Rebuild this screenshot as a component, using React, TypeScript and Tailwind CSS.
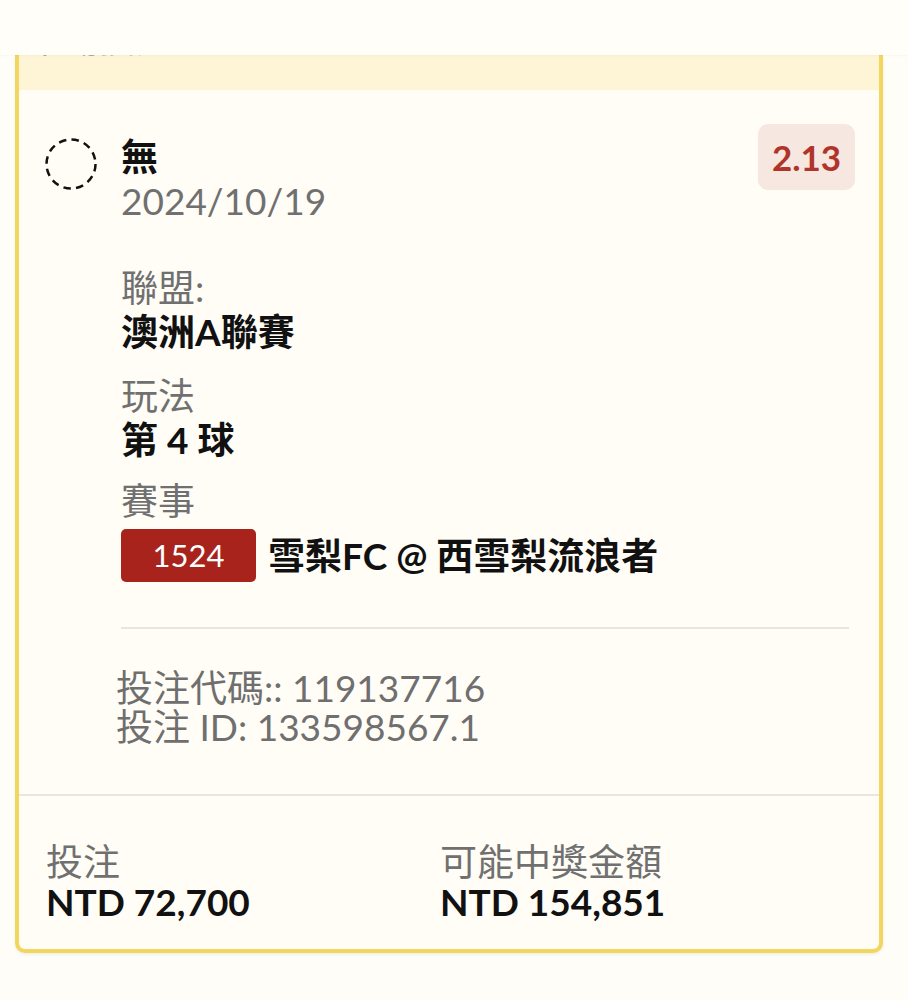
import React from 'react';

const font = "font-['Lato','Noto_Sans_CJK_TC',sans-serif]";

const Field = ({ label, value, className = '' }: { label: string; value: React.ReactNode; className?: string }) => (
  <div className={className}>
    <div className="text-[37px] leading-[44px] text-[#707070]">{label}</div>
    <div className="text-[37px] leading-[44px] font-bold text-[#111]">{value}</div>
  </div>
);

export default function App() {
  return (
    <div className={`min-h-screen bg-[#fffdf7] ${font}`}>
      {/* Top bar */}
      <div className="h-[55px] bg-[#fffef8] shadow-[0_1px_2px_rgba(0,0,0,0.03)] relative z-10" />

      <div className="pl-[15px] pr-[25px]">
        <div className="border-x-4 border-b-4 border-[#f2d65e] rounded-b-[10px] bg-[#fffdf6] overflow-hidden shadow-[0_2px_3px_rgba(0,0,0,0.06)]">
          {/* Header band (scrolled under top bar) */}
          <div className="h-[35px] bg-[#fdf5d6] overflow-hidden">
            <div className="-mt-[38px] pl-[8px] text-[36px] leading-[44px] text-[#a8a8a8]">單場投注</div>
          </div>

          {/* Main */}
          <div className="flex gap-6 pl-[26px] pr-[30px] pt-[34px] pb-[48px] border-b-2 border-[#e8e6df]">
            <div className="mt-[14px] w-[52px] h-[52px] shrink-0">
              <svg viewBox="0 0 52 52" width="52" height="52">
                <circle cx="26" cy="26" r="24.5" fill="none" stroke="#111" strokeWidth="2.5" strokeDasharray="7.5 5.3" />
              </svg>
            </div>

            <div className="flex-1 min-w-0">
              <div className="flex justify-between items-start">
                <div className="mt-[11px]">
                  <div className="text-[37px] leading-[44px] font-bold text-[#111]">無</div>
                  <div className="text-[37px] leading-[44px] text-[#707070]">2024/10/19</div>
                </div>
                <div className="-mr-[6px] w-[97px] h-[66px] rounded-[10px] bg-[#f6e7e1] flex items-center justify-center text-[35px] font-bold text-[#b1342a]">
                  2.13
                </div>
              </div>

              <Field className="mt-[43px]" label="聯盟:" value="澳洲A聯賽" />
              <Field className="mt-[20px]" label="玩法" value="第 4 球" />

              <div className="mt-[17px]">
                <div className="text-[37px] leading-[44px] text-[#707070]">賽事</div>
                <div className="mt-[6px] flex items-center gap-[12px]">
                  <div className="w-[135px] h-[53px] rounded-[5px] bg-[#a8231b] flex items-center justify-center text-[31px] text-white">1524</div>
                  <div className="text-[37px] leading-[44px] font-bold text-[#111]">雪梨FC @ 西雪梨流浪者</div>
                </div>
              </div>

              <div className="mt-[45px] h-[2px] bg-[#e8e6df]" />

              <div className="mt-[39px] -ml-[5px] text-[37px] leading-[39px] text-[#6f6f6f]">
                <div>投注代碼:: 119137716</div>
                <div>投注 ID: 133598567.1</div>
              </div>
            </div>
          </div>

          {/* Footer */}
          <div className="flex pl-[27px] pt-[46px] pb-[27px]">
            <div className="w-[394px]">
              <div className="text-[37px] leading-[40px] text-[#707070]">投注</div>
              <div className="text-[37px] leading-[40px] font-bold text-[#111]">NTD 72,700</div>
            </div>
            <div>
              <div className="text-[37px] leading-[40px] text-[#707070]">可能中獎金額</div>
              <div className="text-[37px] leading-[40px] font-bold text-[#111]">NTD 154,851</div>
            </div>
          </div>
        </div>
      </div>
    </div>
  );
}
